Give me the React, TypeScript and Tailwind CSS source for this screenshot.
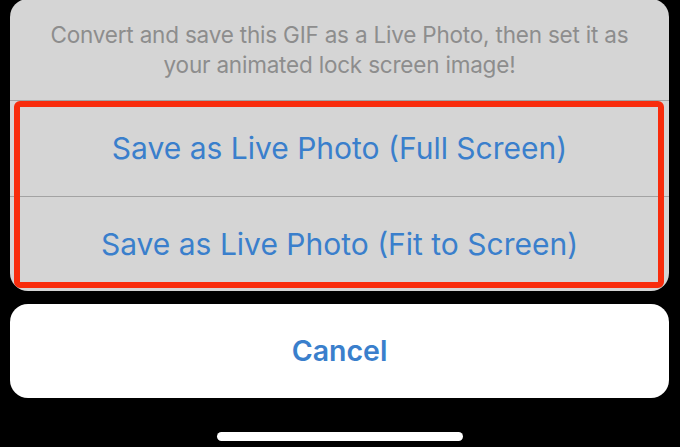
export default function App() {
  return (
    <div
      className="w-[680px] h-[447px] bg-black overflow-hidden flex flex-col pl-[10px] pr-[11px]"
      style={{ fontFamily: 'Inter, "Noto Sans", sans-serif' }}
    >
      <div className="bg-[#d5d5d5] rounded-[18px] h-[292px] mt-[-1px] flex flex-col overflow-hidden">
        <div className="h-[102px] flex items-center justify-center border-b border-[#a3a3a3]">
          <p className="w-[590px] text-center text-[#8d8d8d] text-[22.5px] leading-[30px] tracking-[-0.2px]">
            Convert and save this GIF as a Live Photo, then set it as your animated lock screen image!
          </p>
        </div>
        <div className="relative flex-1 flex flex-col">
          <button className="h-[96px] flex items-center justify-center text-[#3a7fcc] text-[30px] border-b border-[#a3a3a3]">
            Save as Live Photo (Full Screen)
          </button>
          <button className="flex-1 flex items-center justify-center text-[#3a7fcc] text-[30px]">
            Save as Live Photo (Fit to Screen)
          </button>
          <div className="absolute left-[4px] right-[5px] top-0 bottom-[3px] border-[6px] border-[#f82c0c] rounded-[6px] pointer-events-none" />
        </div>
      </div>
      <button className="mt-[13px] h-[94px] bg-white rounded-[18px] flex items-center justify-center text-[#3a7fcc] text-[28.5px] font-semibold">
        Cancel
      </button>
      <div className="mt-[34px] self-center w-[246px] h-[9px] rounded-full bg-white" />
    </div>
  )
}
